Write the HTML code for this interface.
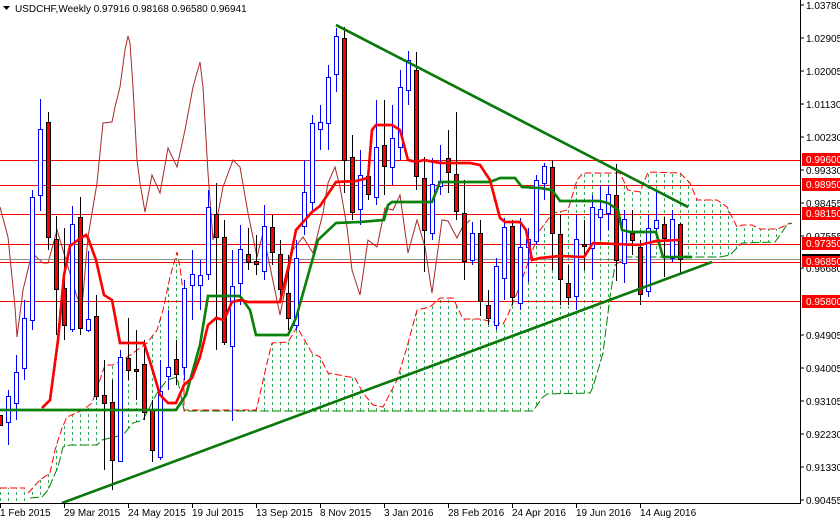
<!DOCTYPE html>
<html><head><meta charset="utf-8"><style>
html,body{margin:0;padding:0;background:#fff;}
svg{display:block;}
text{font-family:"Liberation Sans",sans-serif;font-size:10px;}
</style></head><body>
<svg width="840" height="520" viewBox="0 0 840 520" xmlns="http://www.w3.org/2000/svg">
<defs>
<pattern id="vd" patternUnits="userSpaceOnUse" x="0" y="0" width="8" height="6">
<line x1="0.5" y1="0" x2="0.5" y2="3" stroke="#2eaa55" stroke-width="1"/>
</pattern>
<clipPath id="plot"><rect x="0" y="0" width="800" height="503"/></clipPath>
</defs>
<rect width="840" height="520" fill="#fff"/>
<g clip-path="url(#plot)">
<!-- cloud fills -->
<rect x="0" y="488" width="26" height="15" fill="url(#vd)"/>
<polygon fill="url(#vd)" points="28,493 40,480 50,473 55,450 62,428 67,417 83,410 92,403 105,365 113,365 123,360 133,353 147,343 157,330 163,310 170,277 177,252 180,267 184,300 184,410 177,377 167,380 157,393 143,420 133,423 123,435 102,440 97,445 70,445 63,447 58,467 48,490 42,497 30,498"/>
<polygon fill="url(#vd)" points="184,410 256,410 257,407 267,363 272,343 288,342 297,327 312,353 320,357 328,373 355,378 363,393 373,405 383,407 397,380 407,347 417,310 430,307 440,298 453,298 463,319 480,319 503,324 507,317 517,293 540,230 553,213 568,210 577,180 583,173 620,173 628,190 640,192 648,172 680,173 690,183 697,200 717,200 727,207 737,227 742,225 752,225 760,229 778,229 790,223 792,223 787,225 780,235 775,242 742,243 730,255 720,257 627,257 615,265 610,297 603,353 593,387 590,393 547,394 542,398 533,411 184,411"/>
<!-- cloud edges -->
<polyline fill="none" stroke="#ff0000" stroke-width="1" stroke-dasharray="7 3" points="0,488 25,488"/>
<polyline fill="none" stroke="#ff0000" stroke-width="1" stroke-dasharray="7 3" points="28,493 40,480 50,473 55,450 62,428 67,417 83,410 92,403 105,365 113,365 123,360 133,353 147,343 157,330 163,310 170,277 177,252 180,267 184,300 184,410 256,410 257,407 267,363 272,343 288,342 297,327 312,353 320,357 328,373 355,378 363,393 373,405 383,407 397,380 407,347 417,310 430,307 440,298 453,298 463,319 480,319 503,324 507,317 517,293 540,230 553,213 568,210 577,180 583,173 620,173 628,190 640,192 648,172 680,173 690,183 697,200 717,200 727,207 737,227 742,225 752,225 760,229 778,229 790,223"/>
<polyline fill="none" stroke="#008000" stroke-width="1" stroke-dasharray="9 3" points="30,498 42,497 48,490 58,467 63,447 70,445 97,445 102,440 123,435 133,423 143,420 157,393 167,380 177,377 184,410 184,411 533,411 542,398 547,394 590,393 593,387 603,353 610,297 615,265 627,257 720,257 730,255 742,243 775,242 780,235 787,225 792,223"/>
<!-- chikou -->
<polyline fill="none" stroke="#a52a2a" stroke-width="1" points="0,207 8,237 15,307 17,337 23,290 32,253 43,263 48,263 57,230 77,297 82,307 88,237 97,183 103,123 112,122 115,107 120,87 125,50 128,36 130,43 133,87 137,160 140,183 145,212 152,175 160,193 168,148 177,167 185,130 193,87 200,62 203,87 208,173 213,240 223,187 233,160 240,167 248,213 257,257 263,233 280,315 287,280 293,250 303,237 313,253 323,213 328,183 335,167 340,187 347,227 352,270 360,295 368,240 377,247 385,208 393,210 400,195 408,253 417,220 425,247 432,293 442,220 448,221 457,238 462,228 470,220"/>
<!-- horizontal levels -->
<line x1="0" y1="160.5" x2="800" y2="160.5" stroke="#ff0000"/>
<line x1="0" y1="185.5" x2="800" y2="185.5" stroke="#ff0000"/>
<line x1="0" y1="214.5" x2="800" y2="214.5" stroke="#ff0000"/>
<line x1="0" y1="244.5" x2="800" y2="244.5" stroke="#ff0000"/>
<line x1="0" y1="259.5" x2="800" y2="259.5" stroke="#909090"/>
<line x1="0" y1="262.5" x2="800" y2="262.5" stroke="#ff0000"/>
<line x1="0" y1="301.5" x2="800" y2="301.5" stroke="#ff0000"/>
<!-- candles -->
<g id="candles" stroke-width="1">
</g>
<!-- kijun -->
<polyline fill="none" stroke="#0a820a" stroke-width="2.5" points="0,410 176,410 186,395 200,345 208,296 240,296 250,310 256,335 288,335 296,318 318,240 336,223 360,222 384,220 388,205 392,202 432,202 440,182 490,182 500,178 515,178 522,187 540,188 552,190 560,201 600,201 608,203 618,210 622,230 630,232 656,232 663,257 692,257"/>
<!-- tenkan -->
<polyline fill="none" stroke="#ff0000" stroke-width="2.5" points="42,408 50,400 58,340 64,275 70,246 78,240 86,235 88,238 96,260 104,295 112,300 120,343 144,343 152,368 160,395 168,403 176,403 184,385 192,378 200,357 208,325 216,318 224,320 232,302 240,300 248,302 280,302 290,260 296,230 312,212 320,206 336,182 356,181 368,178 372,130 376,125 392,125 400,130 408,160 416,162 424,160 440,163 470,163 480,165 490,180 500,218 505,222 520,222 526,230 530,250 532,260 540,258 560,256 584,257 593,243 640,245 656,241 680,240"/>
<!-- trendlines -->
<line x1="336" y1="25" x2="688" y2="207" stroke="#0a780a" stroke-width="2.5"/>
<line x1="62" y1="503" x2="712" y2="262" stroke="#0a780a" stroke-width="2.5"/>
</g>
<!-- candles drawn statically -->
<g stroke-width="1">
<rect x="-1.5" y="415.5" width="4" height="10" fill="#ff0000" stroke="#000"/>
<!-- blue/red candles -->
<line x1="8.5" y1="390" x2="8.5" y2="445" stroke="#00f"/><rect x="6.5" y="396.5" width="4" height="26" fill="#fff" stroke="#00f"/>
<line x1="16.5" y1="355" x2="16.5" y2="420" stroke="#00f"/><rect x="14.5" y="372.5" width="4" height="31" fill="#fff" stroke="#00f"/>
<line x1="24.5" y1="300" x2="24.5" y2="380" stroke="#00f"/><rect x="22.5" y="318.5" width="4" height="50" fill="#fff" stroke="#00f"/>
<line x1="32.5" y1="190" x2="32.5" y2="330" stroke="#00f"/><rect x="30.5" y="197.5" width="4" height="123" fill="#fff" stroke="#00f"/>
<line x1="40.5" y1="99" x2="40.5" y2="211" stroke="#00f"/><rect x="38.5" y="129.5" width="4" height="66" fill="#fff" stroke="#00f"/>
<line x1="48.5" y1="112" x2="48.5" y2="250" stroke="#000"/><rect x="46.5" y="122.5" width="4" height="115" fill="#ff0000" stroke="#000"/>
<line x1="56.5" y1="216" x2="56.5" y2="335" stroke="#000"/><rect x="54.5" y="239.5" width="4" height="50" fill="#ff0000" stroke="#000"/>
<line x1="64.5" y1="228" x2="64.5" y2="340" stroke="#000"/><rect x="62.5" y="288.5" width="4" height="37" fill="#ff0000" stroke="#000"/>
<line x1="72.5" y1="206" x2="72.5" y2="332" stroke="#00f"/><rect x="70.5" y="224.5" width="4" height="105" fill="#fff" stroke="#00f"/>
<line x1="80.5" y1="197" x2="80.5" y2="335" stroke="#000"/><rect x="78.5" y="217.5" width="4" height="111" fill="#ff0000" stroke="#000"/>
<line x1="88.5" y1="251" x2="88.5" y2="332" stroke="#00f"/><rect x="86.5" y="319.5" width="4" height="11" fill="#fff" stroke="#00f"/>
<line x1="96.5" y1="295" x2="96.5" y2="400" stroke="#000"/><rect x="94.5" y="316.5" width="4" height="80" fill="#ff0000" stroke="#000"/>
<line x1="104.5" y1="360" x2="104.5" y2="470" stroke="#000"/><rect x="102.5" y="395.5" width="4" height="8" fill="#ff0000" stroke="#000"/>
<line x1="112.5" y1="380" x2="112.5" y2="490" stroke="#000"/><rect x="110.5" y="402.5" width="4" height="58" fill="#ff0000" stroke="#000"/>
<line x1="120.5" y1="350" x2="120.5" y2="462" stroke="#00f"/><rect x="118.5" y="357.5" width="4" height="104" fill="#fff" stroke="#00f"/>
<line x1="128.5" y1="318" x2="128.5" y2="380" stroke="#000"/><rect x="126.5" y="358.5" width="4" height="12" fill="#ff0000" stroke="#000"/>
<line x1="136.5" y1="330" x2="136.5" y2="400" stroke="#000"/><rect x="134.5" y="369.5" width="4" height="2" fill="#ff0000" stroke="#000"/>
<line x1="144.5" y1="340" x2="144.5" y2="420" stroke="#000"/><rect x="142.5" y="364.5" width="4" height="48" fill="#ff0000" stroke="#000"/>
<line x1="152.5" y1="400" x2="152.5" y2="462" stroke="#000"/><rect x="150.5" y="409.5" width="4" height="41" fill="#ff0000" stroke="#000"/>
<line x1="160.5" y1="360" x2="160.5" y2="460" stroke="#00f"/><rect x="158.5" y="391.5" width="4" height="66" fill="#fff" stroke="#00f"/>
<line x1="168.5" y1="310" x2="168.5" y2="390" stroke="#00f"/><rect x="166.5" y="367.5" width="4" height="9" fill="#fff" stroke="#00f"/>
<line x1="176.5" y1="340" x2="176.5" y2="385" stroke="#000"/><rect x="174.5" y="359.5" width="4" height="15" fill="#ff0000" stroke="#000"/>
<line x1="184.5" y1="280" x2="184.5" y2="380" stroke="#00f"/><rect x="182.5" y="288.5" width="4" height="79" fill="#fff" stroke="#00f"/>
<line x1="192.5" y1="250" x2="192.5" y2="320" stroke="#00f"/><rect x="190.5" y="274.5" width="4" height="11" fill="#fff" stroke="#00f"/>
<line x1="200.5" y1="260" x2="200.5" y2="310" stroke="#00f"/><rect x="198.5" y="275.5" width="4" height="10" fill="#fff" stroke="#00f"/>
<line x1="208.5" y1="190" x2="208.5" y2="280" stroke="#00f"/><rect x="206.5" y="207.5" width="4" height="67" fill="#fff" stroke="#00f"/>
<line x1="216.5" y1="183" x2="216.5" y2="350" stroke="#000"/><rect x="214.5" y="214.5" width="4" height="23" fill="#ff0000" stroke="#000"/>
<line x1="224.5" y1="220" x2="224.5" y2="345" stroke="#000"/><rect x="222.5" y="237.5" width="4" height="105" fill="#ff0000" stroke="#000"/>
<line x1="232.5" y1="250" x2="232.5" y2="421" stroke="#00f"/><rect x="230.5" y="286.5" width="4" height="60" fill="#fff" stroke="#00f"/>
<line x1="240.5" y1="225" x2="240.5" y2="305" stroke="#00f"/><rect x="238.5" y="249.5" width="4" height="34" fill="#fff" stroke="#00f"/>
<line x1="248.5" y1="228" x2="248.5" y2="270" stroke="#000"/><rect x="246.5" y="254.5" width="4" height="8" fill="#ff0000" stroke="#000"/>
<line x1="256.5" y1="235" x2="256.5" y2="275" stroke="#000"/><rect x="254.5" y="261.5" width="4" height="3" fill="#ff0000" stroke="#000"/>
<line x1="264.5" y1="205" x2="264.5" y2="280" stroke="#00f"/><rect x="262.5" y="226.5" width="4" height="45" fill="#fff" stroke="#00f"/>
<line x1="272.5" y1="215" x2="272.5" y2="265" stroke="#000"/><rect x="270.5" y="227.5" width="4" height="25" fill="#ff0000" stroke="#000"/>
<line x1="280.5" y1="240" x2="280.5" y2="300" stroke="#000"/><rect x="278.5" y="254.5" width="4" height="35" fill="#ff0000" stroke="#000"/>
<line x1="288.5" y1="255" x2="288.5" y2="330" stroke="#000"/><rect x="286.5" y="293.5" width="4" height="25" fill="#ff0000" stroke="#000"/>
<line x1="296.5" y1="240" x2="296.5" y2="330" stroke="#00f"/><rect x="294.5" y="258.5" width="4" height="67" fill="#fff" stroke="#00f"/>
<line x1="304.5" y1="160" x2="304.5" y2="235" stroke="#00f"/><rect x="302.5" y="192.5" width="4" height="34" fill="#fff" stroke="#00f"/>
<line x1="312.5" y1="115" x2="312.5" y2="210" stroke="#00f"/><rect x="310.5" y="123.5" width="4" height="79" fill="#fff" stroke="#00f"/>
<line x1="320.5" y1="105" x2="320.5" y2="150" stroke="#00f"/><rect x="318.5" y="122.5" width="4" height="7" fill="#fff" stroke="#00f"/>
<line x1="328.5" y1="65" x2="328.5" y2="150" stroke="#00f"/><rect x="326.5" y="77.5" width="4" height="46" fill="#fff" stroke="#00f"/>
<line x1="336.5" y1="28" x2="336.5" y2="92" stroke="#00f"/><rect x="334.5" y="36.5" width="4" height="38" fill="#fff" stroke="#00f"/>
<line x1="344.5" y1="27" x2="344.5" y2="193" stroke="#000"/><rect x="342.5" y="38.5" width="4" height="122" fill="#ff0000" stroke="#000"/>
<line x1="352.5" y1="135" x2="352.5" y2="220" stroke="#000"/><rect x="350.5" y="157.5" width="4" height="55" fill="#ff0000" stroke="#000"/>
<line x1="360.5" y1="150" x2="360.5" y2="225" stroke="#00f"/><rect x="358.5" y="175.5" width="4" height="34" fill="#fff" stroke="#00f"/>
<line x1="368.5" y1="160" x2="368.5" y2="200" stroke="#000"/><rect x="366.5" y="176.5" width="4" height="18" fill="#ff0000" stroke="#000"/>
<line x1="376.5" y1="100" x2="376.5" y2="205" stroke="#00f"/><rect x="374.5" y="147.5" width="4" height="50" fill="#fff" stroke="#00f"/>
<line x1="384.5" y1="100" x2="384.5" y2="195" stroke="#000"/><rect x="382.5" y="145.5" width="4" height="21" fill="#ff0000" stroke="#000"/>
<line x1="392.5" y1="105" x2="392.5" y2="185" stroke="#00f"/><rect x="390.5" y="138.5" width="4" height="29" fill="#fff" stroke="#00f"/>
<line x1="400.5" y1="70" x2="400.5" y2="160" stroke="#00f"/><rect x="398.5" y="87.5" width="4" height="60" fill="#fff" stroke="#00f"/>
<line x1="408.5" y1="51" x2="408.5" y2="105" stroke="#00f"/><rect x="406.5" y="60.5" width="4" height="30" fill="#fff" stroke="#00f"/>
<line x1="416.5" y1="52" x2="416.5" y2="190" stroke="#000"/><rect x="414.5" y="70.5" width="4" height="106" fill="#ff0000" stroke="#000"/>
<line x1="424.5" y1="157" x2="424.5" y2="272" stroke="#000"/><rect x="422.5" y="178.5" width="4" height="52" fill="#ff0000" stroke="#000"/>
<line x1="432.5" y1="158" x2="432.5" y2="240" stroke="#00f"/><rect x="430.5" y="184.5" width="4" height="49" fill="#fff" stroke="#00f"/>
<line x1="440.5" y1="145" x2="440.5" y2="195" stroke="#00f"/><rect x="438.5" y="181.5" width="4" height="5" fill="#fff" stroke="#00f"/>
<line x1="448.5" y1="130" x2="448.5" y2="193" stroke="#000"/><rect x="446.5" y="158.5" width="4" height="14" fill="#ff0000" stroke="#000"/>
<line x1="456.5" y1="112" x2="456.5" y2="220" stroke="#000"/><rect x="454.5" y="174.5" width="4" height="37" fill="#ff0000" stroke="#000"/>
<line x1="464.5" y1="180" x2="464.5" y2="280" stroke="#000"/><rect x="462.5" y="213.5" width="4" height="48" fill="#ff0000" stroke="#000"/>
<line x1="472.5" y1="222" x2="472.5" y2="265" stroke="#00f"/><rect x="470.5" y="233.5" width="4" height="27" fill="#fff" stroke="#00f"/>
<line x1="480.5" y1="220" x2="480.5" y2="316" stroke="#000"/><rect x="478.5" y="233.5" width="4" height="68" fill="#ff0000" stroke="#000"/>
<line x1="488.5" y1="290" x2="488.5" y2="325" stroke="#000"/><rect x="486.5" y="305.5" width="4" height="13" fill="#ff0000" stroke="#000"/>
<line x1="496.5" y1="258" x2="496.5" y2="330" stroke="#00f"/><rect x="494.5" y="266.5" width="4" height="59" fill="#fff" stroke="#00f"/>
<line x1="504.5" y1="218" x2="504.5" y2="300" stroke="#00f"/><rect x="502.5" y="227.5" width="4" height="51" fill="#fff" stroke="#00f"/>
<line x1="512.5" y1="220" x2="512.5" y2="305" stroke="#000"/><rect x="510.5" y="226.5" width="4" height="71" fill="#ff0000" stroke="#000"/>
<line x1="520.5" y1="218" x2="520.5" y2="310" stroke="#00f"/><rect x="518.5" y="247.5" width="4" height="56" fill="#fff" stroke="#00f"/>
<line x1="528.5" y1="228" x2="528.5" y2="282" stroke="#00f"/><rect x="526.5" y="239.5" width="4" height="8" fill="#fff" stroke="#00f"/>
<line x1="536.5" y1="175" x2="536.5" y2="245" stroke="#00f"/><rect x="534.5" y="180.5" width="4" height="61" fill="#fff" stroke="#00f"/>
<line x1="544.5" y1="163" x2="544.5" y2="200" stroke="#00f"/><rect x="542.5" y="166.5" width="4" height="17" fill="#fff" stroke="#00f"/>
<line x1="552.5" y1="160" x2="552.5" y2="270" stroke="#000"/><rect x="550.5" y="167.5" width="4" height="66" fill="#ff0000" stroke="#000"/>
<line x1="560.5" y1="215" x2="560.5" y2="305" stroke="#000"/><rect x="558.5" y="234.5" width="4" height="45" fill="#ff0000" stroke="#000"/>
<line x1="568.5" y1="265" x2="568.5" y2="305" stroke="#000"/><rect x="566.5" y="283.5" width="4" height="14" fill="#ff0000" stroke="#000"/>
<line x1="576.5" y1="215" x2="576.5" y2="310" stroke="#00f"/><rect x="574.5" y="239.5" width="4" height="57" fill="#fff" stroke="#00f"/>
<line x1="584.5" y1="220" x2="584.5" y2="270" stroke="#000"/><rect x="582.5" y="244.5" width="4" height="2" fill="#ff0000" stroke="#000"/>
<line x1="592.5" y1="195" x2="592.5" y2="280" stroke="#00f"/><rect x="590.5" y="207.5" width="4" height="41" fill="#fff" stroke="#00f"/>
<line x1="600.5" y1="185" x2="600.5" y2="240" stroke="#00f"/><rect x="598.5" y="209.5" width="4" height="8" fill="#fff" stroke="#00f"/>
<line x1="608.5" y1="185" x2="608.5" y2="230" stroke="#00f"/><rect x="606.5" y="194.5" width="4" height="19" fill="#fff" stroke="#00f"/>
<line x1="616.5" y1="164" x2="616.5" y2="281" stroke="#000"/><rect x="614.5" y="195.5" width="4" height="65" fill="#ff0000" stroke="#000"/>
<line x1="624.5" y1="210" x2="624.5" y2="283" stroke="#00f"/><rect x="622.5" y="219.5" width="4" height="44" fill="#fff" stroke="#00f"/>
<line x1="632.5" y1="210" x2="632.5" y2="255" stroke="#000"/><rect x="630.5" y="233.5" width="4" height="7" fill="#ff0000" stroke="#000"/>
<line x1="640.5" y1="240" x2="640.5" y2="305" stroke="#000"/><rect x="638.5" y="247.5" width="4" height="47" fill="#ff0000" stroke="#000"/>
<line x1="648.5" y1="215" x2="648.5" y2="297" stroke="#00f"/><rect x="646.5" y="228.5" width="4" height="63" fill="#fff" stroke="#00f"/>
<line x1="656.5" y1="190" x2="656.5" y2="238" stroke="#00f"/><rect x="654.5" y="220.5" width="4" height="8" fill="#fff" stroke="#00f"/>
<line x1="664.5" y1="217" x2="664.5" y2="277" stroke="#000"/><rect x="662.5" y="224.5" width="4" height="14" fill="#ff0000" stroke="#000"/>
<line x1="672.5" y1="210" x2="672.5" y2="262" stroke="#00f"/><rect x="670.5" y="219.5" width="4" height="39" fill="#fff" stroke="#00f"/>
<line x1="680.5" y1="223" x2="680.5" y2="273" stroke="#000"/><rect x="678.5" y="224.5" width="4" height="35" fill="#ff0000" stroke="#000"/>
</g>
<!-- redraw lines over candles -->
<polyline fill="none" stroke="#0a820a" stroke-width="2.5" points="0,410 176,410 186,395 200,345 208,296 240,296 250,310 256,335 288,335 296,318 318,240 336,223 360,222 384,220 388,205 392,202 432,202 440,182 490,182 500,178 515,178 522,187 540,188 552,190 560,201 600,201 608,203 618,210 622,230 630,232 656,232 663,257 692,257"/>
<polyline fill="none" stroke="#ff0000" stroke-width="2.5" points="42,408 50,400 58,340 64,275 70,246 78,240 86,235 88,238 96,260 104,295 112,300 120,343 144,343 152,368 160,395 168,403 176,403 184,385 192,378 200,357 208,325 216,318 224,320 232,302 240,300 248,302 280,302 290,260 296,230 312,212 320,206 336,182 356,181 368,178 372,130 376,125 392,125 400,130 408,160 416,162 424,160 440,163 470,163 480,165 490,180 500,218 505,222 520,222 526,230 530,250 532,260 540,258 560,256 584,257 593,243 640,245 656,241 680,240"/>
<line x1="336" y1="25" x2="688" y2="207" stroke="#0a780a" stroke-width="2.5"/>
<line x1="62" y1="503" x2="712" y2="262" stroke="#0a780a" stroke-width="2.5"/>

<!-- axes -->
<line x1="800.5" y1="0" x2="800.5" y2="503.5" stroke="#000"/>
<line x1="0" y1="503.5" x2="801" y2="503.5" stroke="#000"/>
<g fill="#000">
<text x="806" y="9">1.03780</text>
<text x="806" y="42">1.02905</text>
<text x="806" y="75">1.02005</text>
<text x="806" y="108">1.01130</text>
<text x="806" y="141">1.00230</text>
<text x="806" y="174">0.99330</text>
<text x="806" y="207">0.98455</text>
<text x="806" y="240">0.97555</text>
<text x="806" y="272">0.96680</text>
<text x="806" y="339">0.94905</text>
<text x="806" y="372">0.94005</text>
<text x="806" y="405">0.93105</text>
<text x="806" y="438">0.92230</text>
<text x="806" y="471">0.91330</text>
<text x="806" y="504">0.90455</text>
</g>
<g stroke="#000">
<line x1="800" y1="5" x2="804" y2="5"/><line x1="800" y1="38" x2="804" y2="38"/><line x1="800" y1="71" x2="804" y2="71"/><line x1="800" y1="104" x2="804" y2="104"/><line x1="800" y1="137" x2="804" y2="137"/><line x1="800" y1="170" x2="804" y2="170"/><line x1="800" y1="203" x2="804" y2="203"/><line x1="800" y1="236" x2="804" y2="236"/><line x1="800" y1="268" x2="804" y2="268"/><line x1="800" y1="335" x2="804" y2="335"/><line x1="800" y1="368" x2="804" y2="368"/><line x1="800" y1="401" x2="804" y2="401"/><line x1="800" y1="434" x2="804" y2="434"/><line x1="800" y1="467" x2="804" y2="467"/><line x1="800" y1="500" x2="804" y2="500"/>
</g>
<g>
<rect x="802" y="153" width="38" height="13" fill="#ff0000"/><text x="806" y="163" fill="#fff">0.99600</text>
<rect x="802" y="178" width="38" height="13" fill="#ff0000"/><text x="806" y="188" fill="#fff">0.98950</text>
<rect x="802" y="207" width="38" height="13" fill="#ff0000"/><text x="806" y="217" fill="#fff">0.98150</text>
<rect x="802" y="237" width="38" height="13" fill="#ff0000"/><text x="806" y="247" fill="#fff">0.97350</text>
<rect x="802" y="254" width="38" height="4" fill="#000"/>
<rect x="802" y="256" width="38" height="11" fill="#ff0000"/><text x="806" y="265" fill="#fff">0.96850</text>
<rect x="802" y="295" width="38" height="13" fill="#ff0000"/><text x="806" y="305" fill="#fff">0.95800</text>
</g>
<!-- date labels -->
<g fill="#000">
<text x="0" y="516">1 Feb 2015</text>
<text x="64" y="516">29 Mar 2015</text>
<text x="128" y="516">24 May 2015</text>
<text x="192" y="516">19 Jul 2015</text>
<text x="256" y="516">13 Sep 2015</text>
<text x="320" y="516">8 Nov 2015</text>
<text x="384" y="516">3 Jan 2016</text>
<text x="448" y="516">28 Feb 2016</text>
<text x="512" y="516">24 Apr 2016</text>
<text x="576" y="516">19 Jun 2016</text>
<text x="640" y="516">14 Aug 2016</text>
</g>
<g stroke="#000">
<line x1="0.5" y1="503" x2="0.5" y2="508"/><line x1="64.5" y1="503" x2="64.5" y2="508"/><line x1="128.5" y1="503" x2="128.5" y2="508"/><line x1="192.5" y1="503" x2="192.5" y2="508"/><line x1="256.5" y1="503" x2="256.5" y2="508"/><line x1="320.5" y1="503" x2="320.5" y2="508"/><line x1="384.5" y1="503" x2="384.5" y2="508"/><line x1="448.5" y1="503" x2="448.5" y2="508"/><line x1="512.5" y1="503" x2="512.5" y2="508"/><line x1="576.5" y1="503" x2="576.5" y2="508"/><line x1="640.5" y1="503" x2="640.5" y2="508"/>
</g>
<!-- title -->
<polygon points="3,6 10,6 6.5,10" fill="#000"/>
<text x="15" y="12" fill="#000">USDCHF,Weekly  0.97916 0.98168 0.96580 0.96941</text>
</svg>
</body></html>
